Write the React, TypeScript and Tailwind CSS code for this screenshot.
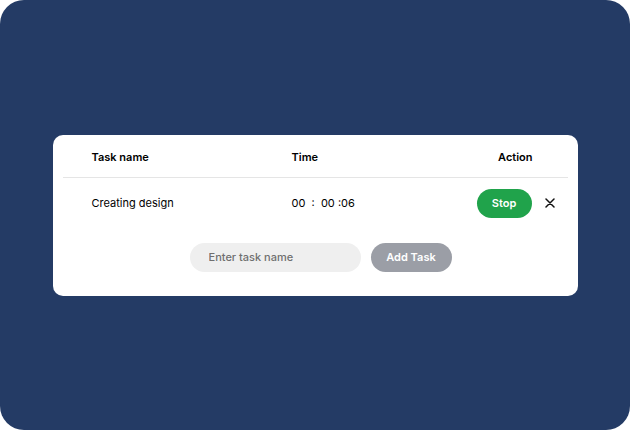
import { useState } from 'react';

export default function App() {
  const [taskName, setTaskName] = useState('');

  return (
    <div className="h-[430px] w-[630px] bg-white" style={{ fontFamily: 'Inter, "Liberation Sans", sans-serif' }}>
      <div className="flex h-full w-full items-center justify-center rounded-[24px] bg-[#243b65]">
        <div className="w-[525px] rounded-[10px] bg-white px-[10px] pb-[24px]">
          {/* Header */}
          <div className="flex h-[43px] items-center border-b border-[#e5e5e5] pt-[3px] text-[11px] font-semibold text-black">
            <div className="w-[229px] pl-[29px]">Task name</div>
            <div className="flex-1">Time</div>
            <div className="w-[100px] pr-[35px] text-right">Action</div>
          </div>

          {/* Row */}
          <div className="flex h-[50px] items-center pt-[1px] text-[11px] text-black">
            <div className="w-[229px] pl-[29px]">Creating design</div>
            <div className="flex-1 whitespace-pre">00  :  00 :06</div>
            <div className="flex items-center pr-[11px]">
              <button className="h-[29px] w-[55px] rounded-full bg-[#20a34b] text-[11px] font-semibold text-white">
                Stop
              </button>
              <button className="ml-[11px] flex h-[14px] w-[14px] items-center justify-center">
                <svg width="10" height="10" viewBox="0 0 10 10" fill="none" stroke="#111" strokeWidth="1.5" strokeLinecap="round">
                  <path d="M1 1l8 8M9 1l-8 8" />
                </svg>
              </button>
            </div>
          </div>

          {/* Add task form */}
          <div className="mt-[15px] flex items-center justify-center gap-[10px] pl-[11px]">
            <input
              value={taskName}
              onChange={(e) => setTaskName(e.target.value)}
              placeholder="Enter task name"
              className="h-[29px] w-[171px] rounded-full bg-[#efefef] pl-[19px] text-[11px] font-medium text-black outline-none placeholder:text-[#6f6f6f]"
            />
            <button className="h-[29px] w-[81px] rounded-full bg-[#9b9ea6] text-[11px] font-semibold text-white">
              Add Task
            </button>
          </div>
        </div>
      </div>
    </div>
  );
}
